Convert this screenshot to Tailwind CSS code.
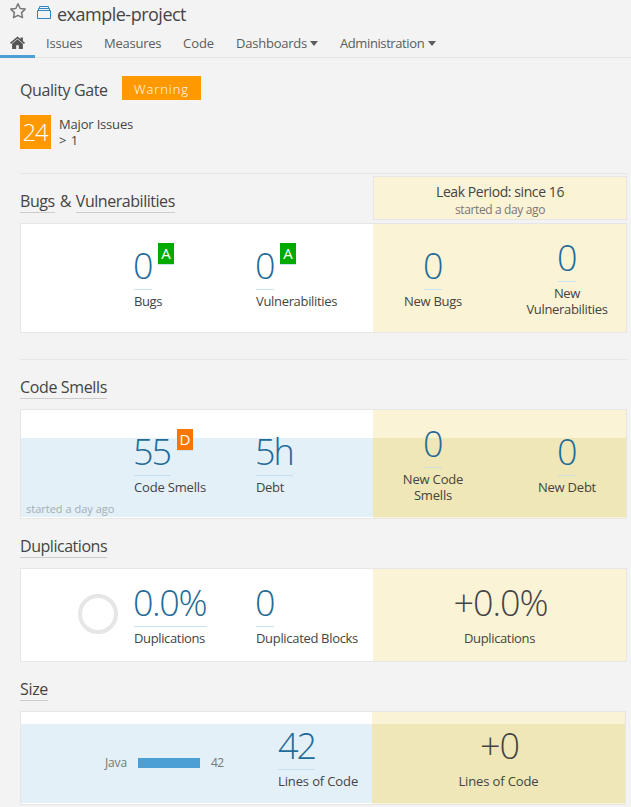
<!DOCTYPE html>
<html lang="en">
<head>
<meta charset="utf-8">
<title>example-project</title>
<script src="https://cdn.jsdelivr.net/npm/@tailwindcss/browser@4"></script>
</head>
<body class="bg-[#f3f3f3] font-['Open_Sans','Noto_Sans',sans-serif] text-[13px] leading-4 text-[#444] h-[807px] overflow-hidden whitespace-nowrap">

<header class="h-[58px] border-b border-[#e6e6e6]">
  <div class="flex h-[30px] pl-[9px]">
    <svg class="mt-[2px] h-[18px] w-[18px] shrink-0" viewBox="0 0 18 18" fill="none" stroke="#777" stroke-width="1.5" stroke-linejoin="round"><path d="M9 1.800l2.200 4.700 5 .6-3.600 3.500.9 5L9 13.300l-4.500 2.300.9-5L1.800 7.100l5-.6z"/></svg>
    <svg class="ml-[10px] mt-[5px] h-[15px] w-[14px] shrink-0" viewBox="0 0 14 15" fill="none" stroke="#2f86c1"><path d="M.5 5.500h13v8H.5zM1.500 5.500v-2h11v2M2.500 3.500v-2h9v2"/></svg>
    <h1 class="ml-[6px] text-[18px] leading-[28px] tracking-[-0.5px]">example-project</h1>
  </div>
  <nav class="flex h-[28px] text-[#5c5c5c] leading-[27px]">
    <a class="flex w-[35px] justify-center border-b-3 border-[#4b9fd5] pt-[6px]"><svg class="h-[14px] w-[15px]" viewBox="0 0 15 14" fill="#555"><path d="M7.500 3.200L2.100 7.700V12.400q0 .6.600.600h3.500V9.300h2.600v3.700h3.500q.6 0 .6-.6V7.700z"/><path d="M7.500.6L10.600 3.100V1.400h2.300v3.600l2.100 1.700-1 1.200L7.500 2.500 1 7.900 0 6.700z"/></svg></a>
    <a class="ml-[11px] w-[58px] tracking-[-0.2px]">Issues</a>
    <a class="w-[79px] tracking-[-0.25px]">Measures</a>
    <a class="w-[53px] tracking-[-0.05px]">Code</a>
    <a class="flex w-[104px] items-start tracking-[-0.22px]">Dashboards<svg class="ml-[3px] mt-[11px] h-[5px] w-[8px]" viewBox="0 0 8 5" fill="#5c5c5c"><path d="M0 0h8L4 5z"/></svg></a>
    <a class="flex items-start tracking-[-0.4px]">Administration<svg class="ml-[4px] mt-[11px] h-[5px] w-[8px]" viewBox="0 0 8 5" fill="#5c5c5c"><path d="M0 0h8L4 5z"/></svg></a>
  </nav>
</header>

<main class="ml-5 w-[607px]">
  <section class="h-[116px] border-b border-[#e6e6e6] pt-[18px]">
    <div class="flex h-6">
      <h2 class="w-[102px] pt-[3px] text-[16px] leading-[22px] tracking-[-0.4px]">Quality Gate</h2>
      <span class="h-6 w-[79px] bg-[#ff9900] text-center text-[13px] font-light leading-[26px] tracking-[0.9px] text-white">Warning</span>
    </div>
    <div class="mt-[15px] flex">
      <span class="h-[34px] w-[31px] bg-[#ff9900] pr-px text-center text-[24px] font-light leading-[34px] tracking-[-1.2px] text-white">24</span>
      <div class="ml-2 pt-[1px]"><div class="tracking-[-0.18px]">Major Issues</div><div class="tracking-[0.500px]">&gt; 1</div></div>
    </div>
  </section>

  <section class="h-[186px] border-b border-[#e6e6e6] pt-[2px]">
    <div class="flex h-[44px] justify-between">
      <h2 class="pt-[14px] text-[16px] leading-[22px] tracking-[-0.46px]"><a class="inline-block h-[23px] border-b border-[#ccc]">Bugs</a><span class="mx-[5px]">&amp;</span><a class="inline-block h-[23px] border-b border-[#ccc]">Vulnerabilities</a></h2>
      <div class="w-[254px] border border-[#e6e6e6] bg-[#fbf3d5] pt-[6px] text-center">
        <div class="text-[14px] leading-[18px] tracking-[-0.42px]">Leak Period: since 16</div>
        <div class="text-[12px] leading-[17px] tracking-[-0.37px] text-[#777]">started a day ago</div>
      </div>
    </div>
    <div class="mt-[3px] flex h-[110px] border border-[#e6e6e6] bg-white">
      <div class="flex w-[352px] shrink-0 items-center pb-[6px] pl-[113px]">
        <div class="w-[122px]">
          <div class="flex"><span class="w-[18px] border-b border-[#cae3f2] pt-[2px] -indent-px text-[36px] font-light leading-[46px] tracking-[-2.600px] text-[#236a97]">0</span><span class="ml-[6px] mt-[2px] h-[22px] w-4 border-b border-[#cae3f2] bg-[#00aa00] text-center text-[15px] leading-[21px] text-white">A</span></div>
          <div class="mt-[3px] tracking-[-0.4px]">Bugs</div>
        </div>
        <div>
          <div class="flex"><span class="w-[18px] border-b border-[#cae3f2] pt-[2px] -indent-px text-[36px] font-light leading-[46px] tracking-[-2.600px] text-[#236a97]">0</span><span class="ml-[6px] mt-[2px] h-[22px] w-4 border-b border-[#cae3f2] bg-[#00aa00] text-center text-[15px] leading-[21px] text-white">A</span></div>
          <div class="mt-[3px] tracking-[-0.33px]">Vulnerabilities</div>
        </div>
      </div>
      <div class="flex w-[253px] items-center gap-[14px] bg-[#fbf3d5] pb-[6px] text-center">
        <div class="w-[120px] shrink-0">
          <div class="flex justify-center"><span class="w-[18px] border-b border-[#cae3f2] pt-[2px] -indent-px text-left text-[36px] font-light leading-[46px] tracking-[-2.600px] text-[#236a97]">0</span></div>
          <div class="mt-[3px] tracking-[-0.27px]">New Bugs</div>
        </div>
        <div class="w-[120px] shrink-0">
          <div class="flex justify-center"><span class="w-[18px] border-b border-[#cae3f2] pt-[2px] -indent-px text-left text-[36px] font-light leading-[46px] tracking-[-2.600px] text-[#236a97]">0</span></div>
          <div class="mt-[3px] tracking-[-0.33px]">New<br>Vulnerabilities</div>
        </div>
      </div>
    </div>
  </section>

  <section class="h-[159px] pt-[16px]">
    <h2 class="text-[16px] leading-[22px] tracking-[-0.36px]"><a class="inline-block h-[23px] border-b border-[#ccc]">Code Smells</a></h2>
    <div class="mt-[10px] flex h-[110px] border border-[#e6e6e6] bg-white">
      <div class="relative flex w-[352px] shrink-0 items-center bg-[linear-gradient(#fff_28px,#e3f0f8_28px,#e3f0f8_107px,#fff_107px)] pb-[6px] pl-[113px]">
        <div class="w-[122px]">
          <div class="flex"><span class="w-[37px] border-b border-[#c5dff0] pt-[2px] -indent-px text-[36px] font-light leading-[46px] tracking-[-2px] text-[#236a97]">55</span><span class="ml-[6px] mt-[2px] h-[22px] w-4 border-b border-[#cae3f2] bg-[#f77700] text-center text-[15px] leading-[21px] text-white">D</span></div>
          <div class="mt-[3px] tracking-[-0.17px]">Code Smells</div>
        </div>
        <div>
          <div class="flex"><span class="w-[37px] border-b border-[#c5dff0] pt-[2px] -indent-px text-[36px] font-light leading-[46px] tracking-[-2px] text-[#236a97]">5h</span></div>
          <div class="mt-[3px] tracking-[-0.33px]">Debt</div>
        </div>
        <span class="absolute bottom-px left-[5px] text-[11px] leading-[17px] text-[#a3adb3]">started a day ago</span>
      </div>
      <div class="flex w-[253px] items-center gap-[14px] bg-[linear-gradient(#fbf3d5_28px,#efe7b8_28px,#efe7b8_107px,#fbf3d5_107px)] pb-[6px] text-center">
        <div class="w-[120px] shrink-0">
          <div class="flex justify-center"><span class="w-[18px] border-b border-[#cfdfd8] pt-[2px] -indent-px text-left text-[36px] font-light leading-[46px] tracking-[-2.600px] text-[#236a97]">0</span></div>
          <div class="mt-[3px] tracking-[-0.17px]">New Code<br>Smells</div>
        </div>
        <div class="w-[120px] shrink-0">
          <div class="flex justify-center"><span class="w-[18px] border-b border-[#cfdfd8] pt-[2px] -indent-px text-left text-[36px] font-light leading-[46px] tracking-[-2.600px] text-[#236a97]">0</span></div>
          <div class="mt-[3px] tracking-[-0.23px]">New Debt</div>
        </div>
      </div>
    </div>
  </section>

  <section class="h-[143px] pt-[16px]">
    <h2 class="text-[16px] leading-[22px] tracking-[-0.46px]"><a class="inline-block h-[23px] border-b border-[#ccc]">Duplications</a></h2>
    <div class="mt-[10px] flex h-[94px] border border-[#e6e6e6] bg-white">
      <div class="flex w-[352px] shrink-0 items-center pb-[6px] pl-[57px]">
        <div class="mr-4 mt-[4px] h-10 w-10 rounded-full border-4 border-[#e6e6e6]"></div>
        <div class="w-[122px]">
          <div class="flex"><span class="w-[73px] border-b border-[#cae3f2] pt-[2px] -indent-px text-[36px] font-light leading-[46px] tracking-[-1.430px] text-[#236a97]">0.0%</span></div>
          <div class="mt-[3px] tracking-[-0.36px]">Duplications</div>
        </div>
        <div>
          <div class="flex"><span class="w-[18px] border-b border-[#cae3f2] pt-[2px] -indent-px text-[36px] font-light leading-[46px] tracking-[-2.600px] text-[#236a97]">0</span></div>
          <div class="mt-[3px] tracking-[-0.32px]">Duplicated Blocks</div>
        </div>
      </div>
      <div class="flex flex-1 flex-col justify-center bg-[#fbf3d5] pb-[6px] text-center">
        <div class="h-[49px] pl-[2px] pt-[2px] text-[36px] font-light leading-[46px] tracking-[-1.100px]">+0.0%</div>
        <div class="mt-[3px] tracking-[-0.36px]">Duplications</div>
      </div>
    </div>
  </section>

  <section class="pt-[16px]">
    <h2 class="text-[16px] leading-[22px] tracking-[-0.32px]"><a class="inline-block h-[23px] border-b border-[#ccc]">Size</a></h2>
    <div class="mt-[10px] flex h-[94px] w-[606px] border border-[#e6e6e6] bg-white">
      <div class="flex w-[351px] shrink-0 items-center bg-[linear-gradient(#fff_12px,#e3f0f8_12px,#e3f0f8_91px,#fff_91px)] pb-[6px]">
        <div class="mt-[16px] flex w-[257px] items-center pl-[84px] text-[12px] tracking-[-0.15px] text-[#777]">
          <span class="w-[33px]">Java</span><span class="h-[10px] w-[62px] bg-[#4b9fd5]"></span><span class="ml-[11px] tracking-[-0.700px]">42</span>
        </div>
        <div>
          <div class="flex"><span class="w-[37px] border-b border-[#c5dff0] pt-[2px] text-[36px] font-light leading-[46px] tracking-[-2.050px] text-[#236a97]">42</span></div>
          <div class="mt-[3px] tracking-[-0.13px]">Lines of Code</div>
        </div>
      </div>
      <div class="flex flex-1 flex-col justify-center bg-[linear-gradient(#fbf3d5_12px,#efe7b8_12px,#efe7b8_91px,#fbf3d5_91px)] pb-[6px] text-center">
        <div class="h-[49px] pl-[2px] pt-[2px] text-[36px] font-light leading-[46px] tracking-[-1.100px]">+0</div>
        <div class="mt-[3px] tracking-[-0.13px]">Lines of Code</div>
      </div>
    </div>
  </section>
</main>
</body>
</html>
